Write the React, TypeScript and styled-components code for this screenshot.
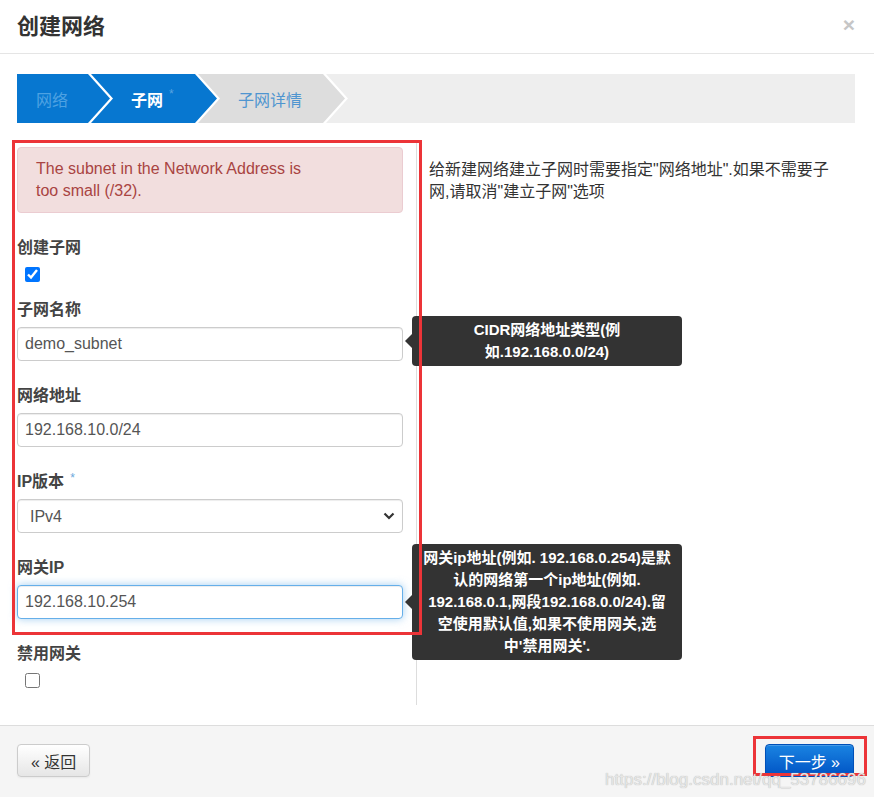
import React from 'react';
import styled, { createGlobalStyle } from 'styled-components';

const FONT = '"Liberation Sans", "Noto Sans CJK SC", sans-serif';

const GlobalStyle = createGlobalStyle`
  html, body { margin: 0; padding: 0; background: #fff; }
  body { font-family: ${FONT}; color: #333; }
  *, *::before, *::after { box-sizing: border-box; }
`;

const Modal = styled.div`
  width: 874px;
  height: 797px;
  display: flex;
  flex-direction: column;
  background: #fff;
  overflow: hidden;
`;

const Header = styled.div`
  height: 54px;
  flex: 0 0 54px;
  padding: 0 19px 0 17px;
  display: flex;
  align-items: center;
  justify-content: space-between;
  border-bottom: 1px solid #e5e5e5;
`;

const Title = styled.h4`
  margin: 0;
  font-size: 22px;
  font-weight: bold;
  line-height: 1;
  color: #333;
`;

const Close = styled.span`
  font-size: 21px;
  font-weight: bold;
  color: #c6c6c6;
  line-height: 1;
  margin-top: -4px;
`;

const Body = styled.div`
  flex: 1;
  min-height: 0;
  padding: 20px 19px 20px 17px;
`;

const Steps = styled.div`
  display: flex;
  height: 49px;
  background: #fff;
`;

const arrowFirst = 'polygon(0 0, calc(100% - 22px) 0, 100% 50%, calc(100% - 22px) 100%, 0 100%)';
const arrowMid = 'polygon(0 0, calc(100% - 22px) 0, 100% 50%, calc(100% - 22px) 100%, 0 100%, 22px 50%)';

const Step = styled.div<{ $bg: string; $color: string; $first?: boolean; $w: number; $strong?: boolean }>`
  flex: 0 0 ${p => p.$w}px;
  margin-left: ${p => (p.$first ? 0 : -19)}px;
  padding-left: ${p => (p.$first ? 19 : 40)}px;
  background: ${p => p.$bg};
  color: ${p => p.$color};
  font-size: 16px;
  font-weight: ${p => (p.$strong ? 'bold' : 'normal')};
  display: flex;
  align-items: center;
  clip-path: ${p => (p.$first ? arrowFirst : arrowMid)};
`;

const StepRest = styled.div`
  flex: 1;
  margin-left: -19px;
  background: #eee;
  clip-path: polygon(0 0, 100% 0, 100% 100%, 0 100%, 22px 50%);
`;

const Req = styled.span<{ $color: string }>`
  color: ${p => p.$color};
  font-size: 12px;
  font-weight: normal;
  line-height: 0;
  margin-left: 6px;
  position: relative;
  top: -5px;
`;

const Content = styled.div`
  position: relative;
  margin-top: 17px;
  display: grid;
  grid-template-columns: 386px 1fr;
  column-gap: 13px;
`;

const LeftCol = styled.div`
  padding-top: 7px;
`;

const RightCol = styled.div`
  border-left: 1px solid #ddd;
  padding: 19px 0 0 12px;
`;

const Help = styled.p`
  margin: 0;
  max-width: 410px;
  font-size: 16px;
  line-height: 22px;
  color: #333;
`;

const Alert = styled.div`
  background: #f2dede;
  border: 1px solid #ebccd1;
  border-radius: 4px;
  color: #a94442;
  padding: 10px 18px;
  font-size: 16px;
  line-height: 22px;
  margin-bottom: 24px;
`;

const AlertText = styled.div`
  max-width: 285px;
`;

const Group = styled.div<{ $check?: boolean }>`
  margin-bottom: ${p => (p.$check ? 16 : 24)}px;
`;

const Label = styled.label`
  display: block;
  height: 22px;
  font-size: 16px;
  font-weight: bold;
  line-height: 22px;
  color: #444;
  margin-bottom: 6px;
`;

const CheckWrap = styled.div`
  padding: 2px 0 0 8px;
  height: 18px;
  display: flex;
`;

const Check = styled.input`
  width: 15px;
  height: 15px;
  margin: 0;
  accent-color: #0075ff;
`;

const Field = styled.div`
  position: relative;
`;

const TextInput = styled.input<{ $focus?: boolean }>`
  display: block;
  width: 100%;
  height: 34px;
  padding: 6px 7px;
  font-family: ${FONT};
  font-size: 16px;
  color: #555;
  background: #fff;
  border: 1px solid ${p => (p.$focus ? '#66afe9' : '#ccc')};
  border-radius: 4px;
  outline: none;
  box-shadow: inset 0 1px 1px rgba(0, 0, 0, 0.075)
    ${p => (p.$focus ? ', 0 0 8px rgba(102, 175, 233, 0.6)' : '')};
`;

const Select = styled.select`
  display: block;
  width: 100%;
  height: 34px;
  padding: 0 12px;
  font-family: ${FONT};
  font-size: 16px;
  color: #555;
  background: #fff;
  border: 1px solid #ccc;
  border-radius: 4px;
  appearance: none;
  outline: none;
  box-shadow: inset 0 1px 1px rgba(0, 0, 0, 0.075);
`;

const Chevron = styled.svg`
  position: absolute;
  right: 8px;
  top: 13px;
  pointer-events: none;
`;

const Tip = styled.div<{ $shift?: number }>`
  position: absolute;
  left: calc(100% + 9px);
  top: 50%;
  transform: translateY(-50%);
  margin-top: ${p => p.$shift ?? 0}px;
  width: 270px;
  padding: 3px 4px;
  background: #333;
  color: #fff;
  border-radius: 4px;
  text-align: center;
  font-size: 15px;
  font-weight: bold;
  line-height: 22px;
  z-index: 2;
  &::before {
    content: '';
    position: absolute;
    right: 100%;
    top: 50%;
    margin-top: -7px;
    border-style: solid;
    border-width: 7px 7px 7px 0;
    border-color: transparent #333 transparent transparent;
  }
`;

const Annotation = styled.div<{ $top: number; $left: number; $w: number; $h: number }>`
  position: absolute;
  top: ${p => p.$top}px;
  left: ${p => p.$left}px;
  width: ${p => p.$w}px;
  height: ${p => p.$h}px;
  border: 3px solid #ec3438;
  pointer-events: none;
  z-index: 3;
`;

const Footer = styled.div`
  position: relative;
  height: 72px;
  flex: 0 0 72px;
  border-top: 1px solid #ddd;
  background: #f5f5f5;
  padding: 18px 20px 0 17px;
  display: flex;
  justify-content: space-between;
  align-items: flex-start;
`;

const Button = styled.button<{ $primary?: boolean }>`
  height: 33px;
  padding: 0 ${p => (p.$primary ? 13 : 13)}px;
  font-family: ${FONT};
  font-size: 16px;
  border-radius: 4px;
  cursor: pointer;
  color: ${p => (p.$primary ? '#fff' : '#333')};
  border: 1px solid ${p => (p.$primary ? '#0050b8' : '#ccc')};
  background: ${p =>
    p.$primary
      ? 'linear-gradient(#1a84e2, #0053c4)'
      : 'linear-gradient(#ffffff, #e6e6e6)'};
  box-shadow: inset 0 1px 0 rgba(255, 255, 255, 0.2), 0 1px 2px rgba(0, 0, 0, 0.05);
`;

const Watermark = styled.span`
  position: absolute;
  right: 8px;
  top: 44px;
  font-size: 17px;
  color: #e6e6e6;
  text-shadow: 0 0 1px #a8a8a8;
  pointer-events: none;
  z-index: 4;
`;

export default function App() {
  return (
    <>
      <GlobalStyle />
      <Modal>
        <Header>
          <Title>创建网络</Title>
          <Close>×</Close>
        </Header>
        <Body>
          <Steps>
            <Step $first $w={93} $bg="#0777d0" $color="#4ea2e2">网络</Step>
            <Step $w={126} $bg="#0777d0" $color="#fff" $strong>
              子网<Req $color="#5aa4e0">*</Req>
            </Step>
            <Step $w={147} $bg="#dddddd" $color="#4f95d0">子网详情</Step>
            <StepRest />
          </Steps>
          <Content>
            <Annotation $top={0} $left={-5} $w={410} $h={495} />
            <LeftCol>
              <Alert>
                <AlertText>The subnet in the Network Address is too small (/32).</AlertText>
              </Alert>
              <Group $check>
                <Label>创建子网</Label>
                <CheckWrap>
                  <Check type="checkbox" defaultChecked />
                </CheckWrap>
              </Group>
              <Group>
                <Label>子网名称</Label>
                <Field>
                  <TextInput defaultValue="demo_subnet" />
                  <Tip $shift={-3}>
                    CIDR网络地址类型(例<br />如.192.168.0.0/24)
                  </Tip>
                </Field>
              </Group>
              <Group>
                <Label>网络地址</Label>
                <Field>
                  <TextInput defaultValue="192.168.10.0/24" />
                </Field>
              </Group>
              <Group>
                <Label>
                  IP版本<Req $color="#6aa8dc">*</Req>
                </Label>
                <Field>
                  <Select defaultValue="ipv4">
                    <option value="ipv4">IPv4</option>
                    <option value="ipv6">IPv6</option>
                  </Select>
                  <Chevron width="12" height="8" viewBox="0 0 12 8">
                    <polyline points="1.5,1.5 6,6 10.5,1.5" fill="none" stroke="#333" strokeWidth="2.2" />
                  </Chevron>
                </Field>
              </Group>
              <Group>
                <Label>网关IP</Label>
                <Field>
                  <TextInput $focus defaultValue="192.168.10.254" />
                  <Tip>
                    网关ip地址(例如. 192.168.0.254)是默<br />
                    认的网络第一个ip地址(例如.<br />
                    192.168.0.1,网段192.168.0.0/24).留<br />
                    空使用默认值,如果不使用网关,选<br />
                    中'禁用网关'.
                  </Tip>
                </Field>
              </Group>
              <Group $check>
                <Label>禁用网关</Label>
                <CheckWrap>
                  <Check type="checkbox" />
                </CheckWrap>
              </Group>
            </LeftCol>
            <RightCol>
              <Help>给新建网络建立子网时需要指定"网络地址".如果不需要子网,请取消"建立子网"选项</Help>
            </RightCol>
          </Content>
        </Body>
        <Footer>
          <Button>« 返回</Button>
          <Button $primary>下一步 »</Button>
          <Annotation $top={10} $left={753} $w={114} $h={40} />
          <Watermark>https://blog.csdn.net/qq_53786696</Watermark>
        </Footer>
      </Modal>
    </>
  );
}
